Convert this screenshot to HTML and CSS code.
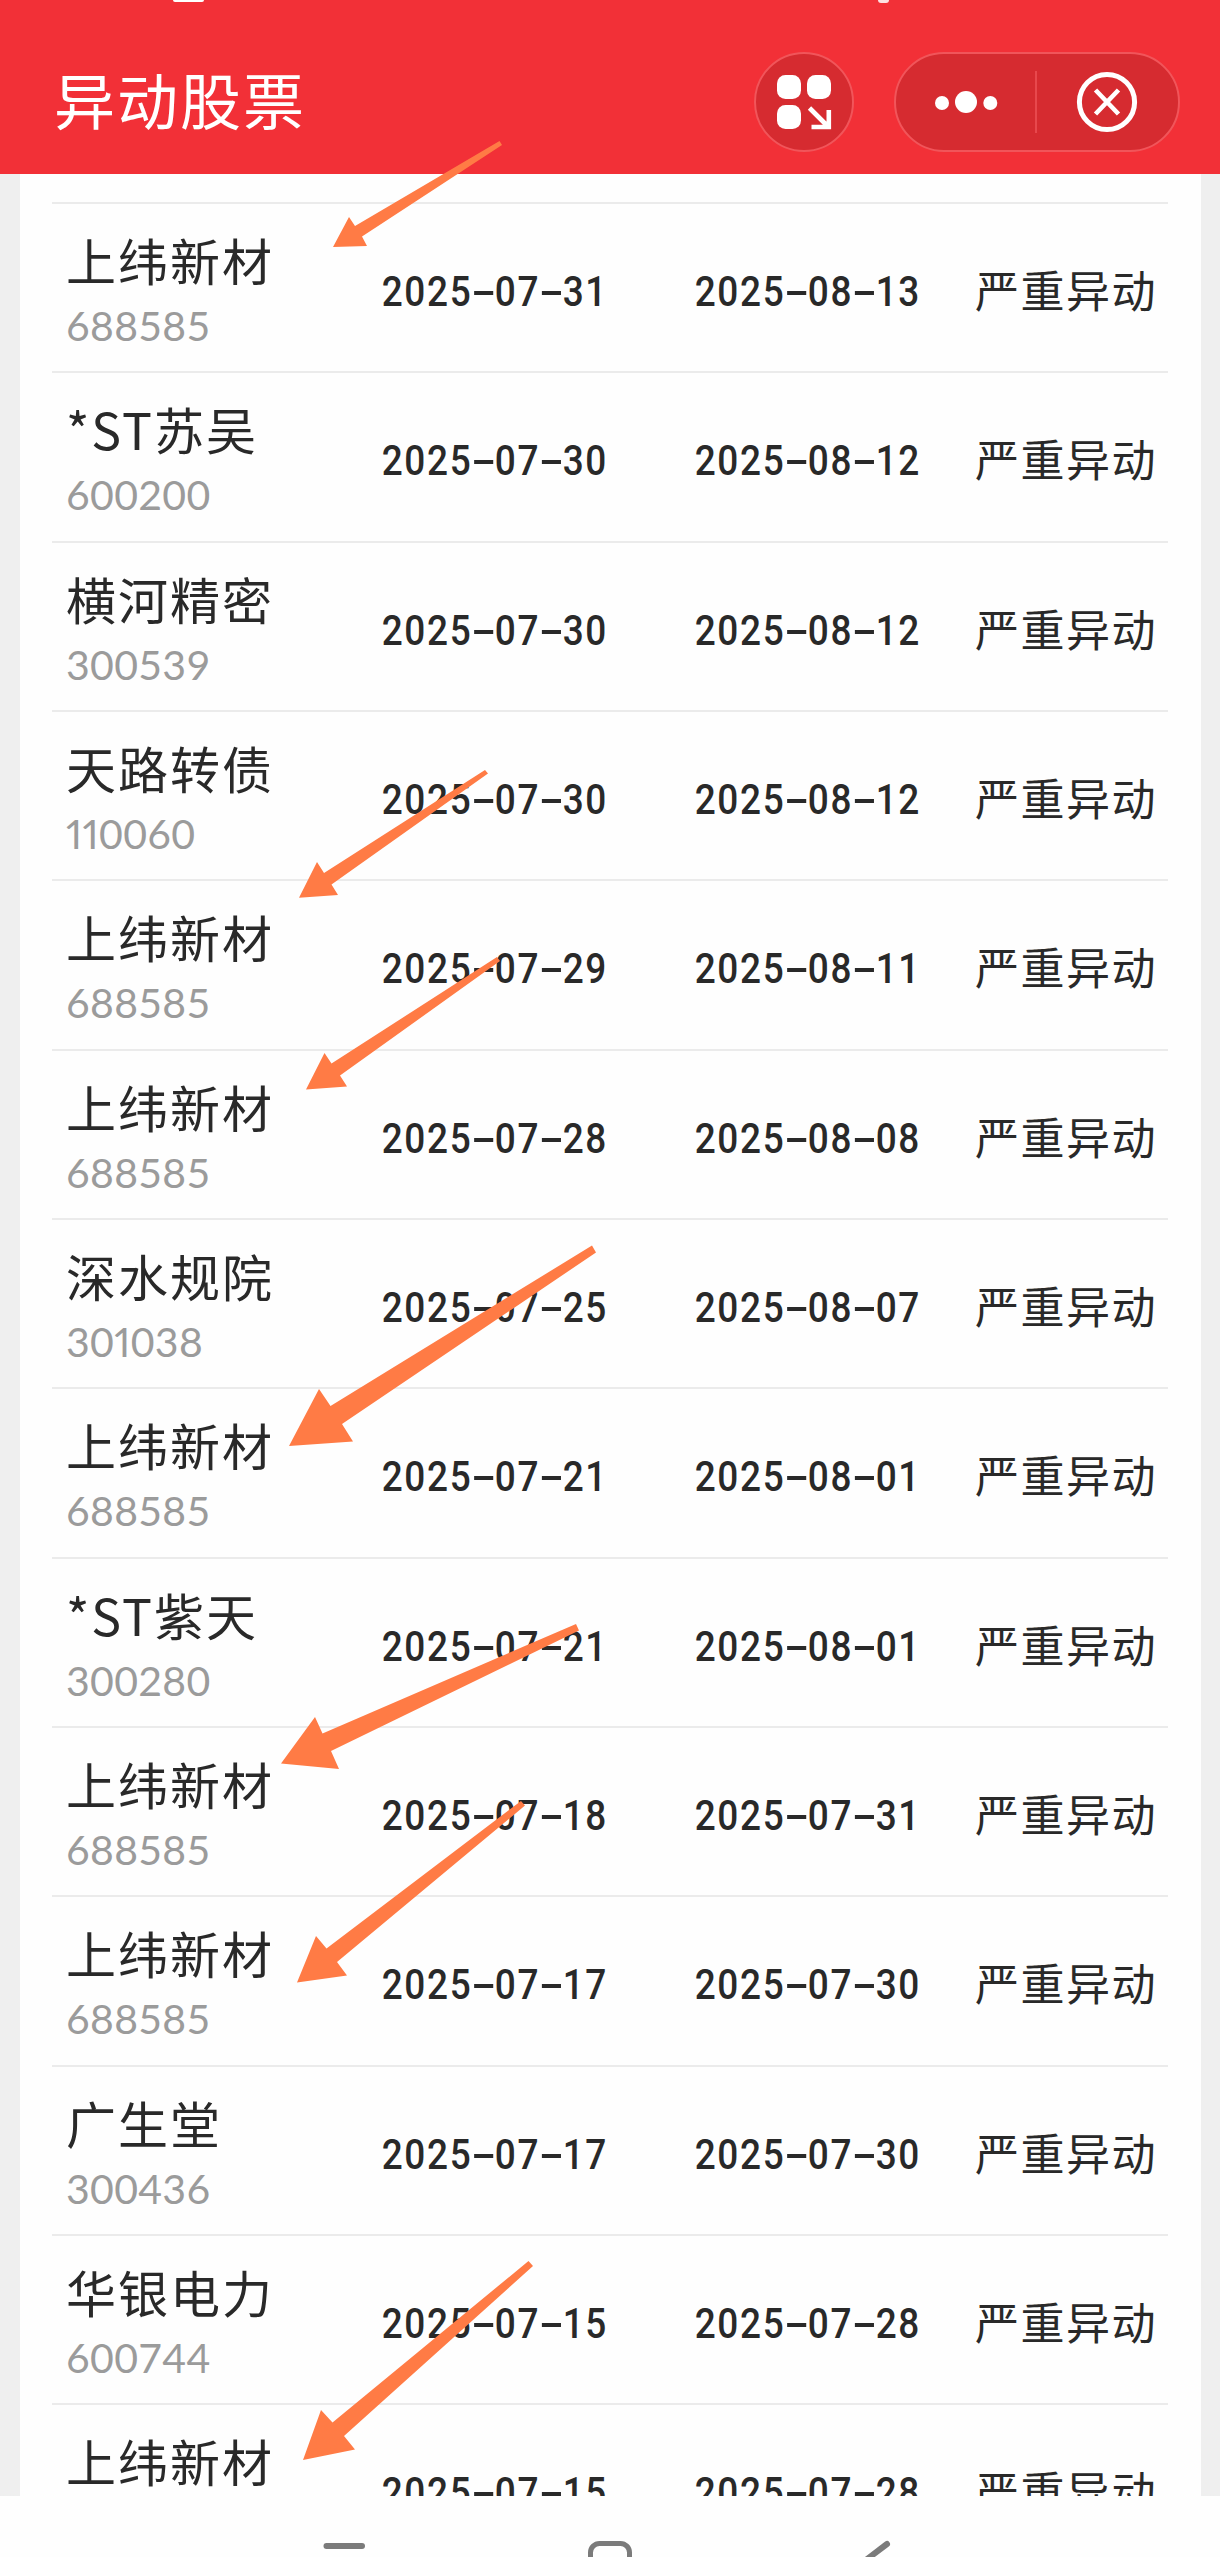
FILE: index.html
```html
<!DOCTYPE html>
<html lang="zh-CN">
<head>
    <meta charset="UTF-8">
    <meta name="viewport" content="width=device-width, initial-scale=1.0">
    <title>异动股票</title>
    <link rel="stylesheet" href="styles.css">
</head>
<body>
    <div class="page">
        <header class="header">
            <span class="status-bit status-left"></span>
            <span class="status-bit status-right"></span>
            <h1 class="title">异动股票</h1>
            <button class="round-btn">
                <svg width="60" height="60" viewBox="0 0 60 60">
                    <rect x="3" y="3" width="24" height="24" rx="8.5" fill="#fff"/>
                    <rect x="33" y="3" width="24" height="24" rx="8.5" fill="#fff"/>
                    <rect x="3" y="33" width="24" height="24" rx="8.5" fill="#fff"/>
                    <path d="M35.5 36 L54 54.5 M37.5 55 H54.8 V38" fill="none" stroke="#fff" stroke-width="4.6"/>
                </svg>
            </button>
            <div class="capsule">
                <svg class="dots" width="64" height="24" viewBox="0 0 64 24">
                    <circle cx="8" cy="13" r="7" fill="#fff"/>
                    <circle cx="32" cy="12" r="11" fill="#fff"/>
                    <circle cx="56.3" cy="13" r="7" fill="#fff"/>
                </svg>
                <span class="divider"></span>
                <svg class="close" width="62" height="62" viewBox="0 0 62 62">
                    <circle cx="31" cy="31" r="27.6" fill="none" stroke="#fff" stroke-width="5"/>
                    <path d="M19.5 19 L42.5 43 M42.5 19 L19.5 43" stroke="#fff" stroke-width="4.6"/>
                </svg>
            </div>
        </header>

        <main class="content">
            <div class="list" id="list"></div>
        </main>

        <nav class="navbar">
            <svg width="1220" height="61" viewBox="0 0 1220 61" fill="none" stroke="#7b7b7b" stroke-width="6" stroke-linecap="round">
                <path d="M326.5 50 H362"/>
                <rect x="590.5" y="47.5" width="39" height="39" rx="9" stroke-width="5"/>
                <path d="M887 48 L862 67"/>
            </svg>
        </nav>

        <!-- hand-drawn marker arrows -->
        <svg class="arrows" width="1220" height="2557" viewBox="0 0 1220 2557" fill="#ff7b45">
            <polygon points="333,247 349,217 355,226 499.5,141 502,145 362,236.5 367,246"/>
            <polygon points="299,897.7 317,862 324,873 485,770 488,773.5 331.5,884.5 338,895"/>
            <polygon points="306,1089.5 324.5,1053 331.5,1063.5 497,957 500,961 340,1075.5 347,1086.5"/>
            <polygon points="289,1446 319,1389 330.5,1406 592,1245.5 596,1252.5 342,1424 353,1441.5"/>
            <polygon points="281,1763.5 315,1717 322.5,1733.5 576,1624 579,1630.5 331,1751 339,1769"/>
            <polygon points="297,1982.5 316,1936 326.5,1948.5 521,1801 525,1805.5 337,1962 347,1975.5"/>
            <polygon points="303,2460 321,2410 332.5,2422.5 528.5,2261 533,2266 344,2436 355,2449.5"/>
        </svg>
    </div>

    <script>
        const stocks = [
            ['上纬新材', '688585', '2025-07-31', '2025-08-13'],
            ['*ST苏吴', '600200', '2025-07-30', '2025-08-12'],
            ['横河精密', '300539', '2025-07-30', '2025-08-12'],
            ['天路转债', '110060', '2025-07-30', '2025-08-12'],
            ['上纬新材', '688585', '2025-07-29', '2025-08-11'],
            ['上纬新材', '688585', '2025-07-28', '2025-08-08'],
            ['深水规院', '301038', '2025-07-25', '2025-08-07'],
            ['上纬新材', '688585', '2025-07-21', '2025-08-01'],
            ['*ST紫天', '300280', '2025-07-21', '2025-08-01'],
            ['上纬新材', '688585', '2025-07-18', '2025-07-31'],
            ['上纬新材', '688585', '2025-07-17', '2025-07-30'],
            ['广生堂', '300436', '2025-07-17', '2025-07-30'],
            ['华银电力', '600744', '2025-07-15', '2025-07-28'],
            ['上纬新材', '688585', '2025-07-15', '2025-07-28']
        ];

        // Dashes are as wide as a digit
        function formatDate(date) {
            return date.replace(/-/g, '<span class="dash">-</span>');
        }

        // Narrow ones in the stock codes
        function formatCode(code) {
            return code.replace(/1/g, '<span class="one">1</span>');
        }

        document.getElementById('list').innerHTML = stocks.map(([name, code, start, end]) => `
            <div class="row">
                <div class="stock">
                    <div class="name">${name}</div>
                    <div class="code">${formatCode(code)}</div>
                </div>
                <div class="date">${formatDate(start)}</div>
                <div class="date">${formatDate(end)}</div>
                <div class="type">严重异动</div>
            </div>`).join('');
    </script>
</body>
</html>
```
FILE: styles.css
```css
* {
    margin: 0;
    padding: 0;
    box-sizing: border-box;
}

body {
    font-family: "Noto Sans CJK SC", sans-serif;
    background: #fefefe;
    color: #292929;
}

.page {
    position: relative;
    width: 1220px;
    height: 2557px;
    overflow: hidden;
    display: flex;
    flex-direction: column;
}

.header {
    position: relative;
    flex: none;
    height: 174px;
    background: #f23037;
    display: flex;
    align-items: center;
    padding: 30px 40px 0 54px;
}

.status-bit {
    position: absolute;
    top: 0;
    background: #fff;
}

.status-left {
    left: 173px;
    width: 31px;
    height: 2px;
    border-radius: 0 0 6px 6px;
}

.status-right {
    left: 878px;
    width: 11px;
    height: 3px;
    border-radius: 0 0 6px 6px;
    opacity: 0.85;
}

.title {
    flex: 1;
    font-size: 61px;
    font-weight: 400;
    letter-spacing: 2px;
    line-height: 90px;
    padding-bottom: 7px;
    color: #fff;
}

.round-btn,
.capsule {
    display: flex;
    align-items: center;
    height: 100px;
    background: #d62b30;
    border: 2px solid #f1555a;
    border-radius: 50px;
}

.round-btn {
    width: 100px;
    justify-content: center;
    margin-right: 40px;
}

.capsule {
    width: 286px;
    padding-left: 38px;
}

.divider {
    width: 2px;
    height: 62px;
    background: #e8484d;
    margin-left: 37px;
}

.close {
    margin-left: 39px;
}

.content {
    flex: none;
    height: 2322px;
    overflow: hidden;
    padding: 0 19px 0 20px;
    background: #efefef;
}

.list {
    height: 100%;
    padding: 28px 33px 0 32px;
    background: #fefefe;
}

.row {
    display: grid;
    grid-template-columns: 242px 314px 313px 1fr;
    height: 169.33px;
    border-top: 2px solid #ebebeb;
}

.stock {
    padding: 17px 0 0 14px;
}

.name {
    font-size: 50px;
    letter-spacing: 2px;
    line-height: 76px;
    white-space: nowrap;
}

.code {
    font-family: Lato, sans-serif;
    font-size: 41px;
    font-variant-numeric: tabular-nums;
    letter-spacing: 0.3px;
    line-height: 54px;
    padding-top: 2px;
    color: #9b9b9b;
}

.one {
    font-variant-numeric: proportional-nums;
}

.date {
    font-family: Roboto, sans-serif;
    font-size: 42px;
    font-weight: 500;
    letter-spacing: 1.9px;
    line-height: 176px;
    text-align: right;
    white-space: nowrap;
    transform: scaleX(0.88);
    transform-origin: right;
}

.dash {
    display: inline-block;
    width: 25.5px;
    text-align: center;
    letter-spacing: 0;
    transform: scaleX(2);
}

.type {
    font-size: 44px;
    letter-spacing: 1.5px;
    line-height: 171px;
    text-align: right;
    padding-right: 11px;
    white-space: nowrap;
}

.navbar {
    flex: none;
    height: 61px;
    background: #fefefe;
}

.navbar svg {
    display: block;
}

.arrows {
    position: absolute;
    top: 0;
    left: 0;
}
```
